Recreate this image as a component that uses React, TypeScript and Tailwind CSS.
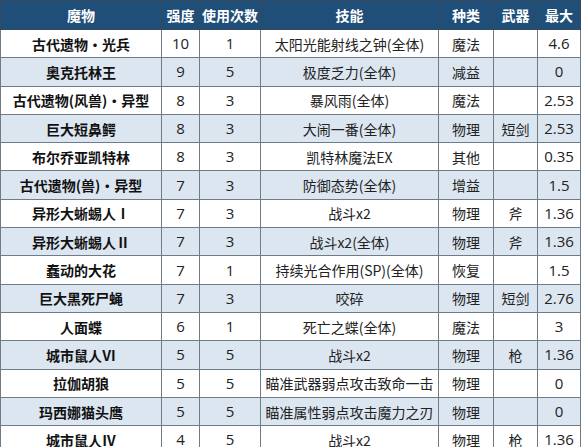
const rows: [string, string, string, string, string, string, string][] = [
  ["古代遗物・光兵", "10", "1", "太阳光能射线之钟(全体)", "魔法", "", "4.6"],
  ["奥克托林王", "9", "5", "极度乏力(全体)", "减益", "", "0"],
  ["古代遗物(风兽)・异型", "8", "3", "暴风雨(全体)", "魔法", "", "2.53"],
  ["巨大短鼻鳄", "8", "3", "大闹一番(全体)", "物理", "短剑", "2.53"],
  ["布尔乔亚凯特林", "8", "3", "凯特林魔法EX", "其他", "", "0.35"],
  ["古代遗物(兽)・异型", "7", "3", "防御态势(全体)", "增益", "", "1.5"],
  ["异形大蜥蜴人Ⅰ", "7", "3", "战斗x2", "物理", "斧", "1.36"],
  ["异形大蜥蜴人Ⅱ", "7", "3", "战斗x2(全体)", "物理", "斧", "1.36"],
  ["蠢动的大花", "7", "1", "持续光合作用(SP)(全体)", "恢复", "", "1.5"],
  ["巨大黑死尸蝇", "7", "3", "咬碎", "物理", "短剑", "2.76"],
  ["人面蝶", "6", "1", "死亡之蝶(全体)", "魔法", "", "3"],
  ["城市鼠人Ⅵ", "5", "5", "战斗x2", "物理", "枪", "1.36"],
  ["拉伽胡狼", "5", "5", "瞄准武器弱点攻击致命一击", "物理", "", "0"],
  ["玛西娜猫头鹰", "5", "5", "瞄准属性弱点攻击魔力之刃", "物理", "", "0"],
  ["城市鼠人Ⅳ", "4", "5", "战斗x2", "物理", "枪", "1.36"],
];

const headers = ["魔物", "强度", "使用次数", "技能", "种类", "武器", "最大"];
const widths = [161, 38, 61, 178, 55, 44, 43];

const cjk = "font-['Microsoft_YaHei','Noto_Sans_CJK_SC',sans-serif]";

export default function App() {
  return (
    <div className="w-[584px] h-[447px] overflow-hidden bg-white">
      <table
        className={`table-fixed border-collapse w-[580px] text-[#222] ${cjk}`}
      >
        <colgroup>
          {widths.map((w, i) => (
            <col key={i} style={{ width: w }} />
          ))}
        </colgroup>
        <thead>
          <tr className="bg-[#1f4e79] h-[29px]">
            {headers.map((h) => (
              <th
                key={h}
                className="border border-[#34495e] p-0 text-center text-[14px] font-bold text-white leading-none"
              >
                {h}
              </th>
            ))}
          </tr>
        </thead>
        <tbody>
          {rows.map((r, i) => (
            <tr
              key={r[0]}
              className={`h-[28.3px] ${i % 2 === 1 ? "bg-[#dce6f1]" : "bg-white"}`}
            >
              {r.map((c, j) => (
                <td
                  key={j}
                  className={`border border-[#6f7c88] p-0 text-center leading-none whitespace-nowrap ${
                    j === 0
                      ? "font-bold text-[14px] text-[#111]"
                      : j === 1 || j === 2 || j === 6
                        ? "text-[15px] font-['Open_Sans',sans-serif]"
                        : "text-[14px]"
                  }`}
                >
                  {c}
                </td>
              ))}
            </tr>
          ))}
        </tbody>
      </table>
    </div>
  );
}
